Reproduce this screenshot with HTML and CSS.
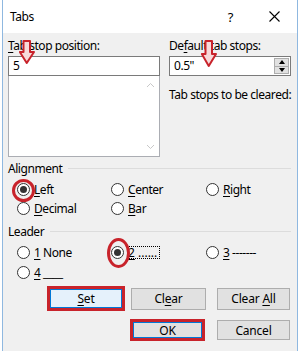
FILE: index.html
```html
<!DOCTYPE html>
<html lang="en">
<head>
  <meta charset="UTF-8" />
  <title>Tabs</title>
  <link rel="stylesheet" href="styles.css">
</head>
<body>
  <div class="dialog">
    <div class="titlebar">
      <span class="title">Tabs</span>
      <span class="help">?</span>
      <svg class="close" width="11" height="11" viewBox="0 0 11 11">
        <path d="M0.5 0.5 L10.5 10.5 M10.5 0.5 L0.5 10.5" stroke="#000" stroke-width="1.1" fill="none" />
      </svg>
    </div>

    <div class="content">
      <div class="top">
        <div class="col col-left">
          <div class="label"><u>T</u>ab stop position:</div>
          <div class="input">5</div>
          <div class="listbox">
            <div class="scroll">
              <svg width="9" height="6" viewBox="0 0 9 6"><path d="M1 5 L4.5 1.5 L8 5" stroke="#c8c8c8" fill="none" /></svg>
              <svg width="9" height="6" viewBox="0 0 9 6"><path d="M1 1 L4.5 4.5 L8 1" stroke="#c8c8c8" fill="none" /></svg>
            </div>
          </div>
          <svg class="arrow arrow-1" width="16" height="24" viewBox="0 0 16 24">
            <path d="M4.5 1 H11 V12 H15 L7.75 23 L0.8 12 H4.5 Z" fill="#f7dada" stroke="#c8232b" stroke-width="2" stroke-linejoin="round" />
          </svg>
        </div>
        <div class="col col-right">
          <div class="label">De<u>f</u>ault tab stops:</div>
          <div class="spin">
            <span class="spin-val">0.5"</span>
            <div class="spin-btns">
              <span class="spin-btn"><i class="tri up"></i></span>
              <span class="spin-btn"><i class="tri down"></i></span>
            </div>
          </div>
          <div class="label cleared">Tab stops to be cleared:</div>
          <svg class="arrow arrow-2" width="16" height="27" viewBox="0 0 16 27">
            <path d="M4.5 1 H11 V14 H15 L7.75 26 L0.8 14 H4.5 Z" fill="#f7dada" stroke="#c8232b" stroke-width="2" stroke-linejoin="round" />
          </svg>
        </div>
      </div>

      <div class="group-head"><span>Alignment</span><i></i></div>
      <div class="options align">
        <label class="opt"><span class="radio on"><span class="mark mark-left"></span></span><span><u>L</u>eft</span></label>
        <label class="opt"><span class="radio"></span><span><u>C</u>enter</span></label>
        <label class="opt"><span class="radio"></span><span><u>R</u>ight</span></label>
        <label class="opt"><span class="radio"></span><span><u>D</u>ecimal</span></label>
        <label class="opt"><span class="radio"></span><span><u>B</u>ar</span></label>
      </div>

      <div class="group-head leader-head"><span>Leader</span><i></i></div>
      <div class="options leader">
        <label class="opt"><span class="radio"></span><span><u>1</u> None</span></label>
        <label class="opt"><span class="radio on"><span class="mark mark-two"></span></span><span class="focus"><u>2</u> ......</span></label>
        <label class="opt"><span class="radio"></span><span><u>3</u> -------</span></label>
        <label class="opt"><span class="radio"></span><span><u>4</u> ____</span></label>
      </div>

      <div class="btn-row">
        <button class="btn btn-set marked"><u>S</u>et</button>
        <button class="btn btn-clear">Cl<u>e</u>ar</button>
        <button class="btn btn-clear-all">Clear <u>A</u>ll</button>
      </div>
      <div class="btn-row row-2">
        <button class="btn btn-ok marked">OK</button>
        <button class="btn btn-cancel">Cancel</button>
      </div>
    </div>
  </div>
</body>
</html>
```

FILE: styles.css
```css
body {
  margin: 0;
  background: #fff;
}
.dialog {
  margin-left: 2px;
  width: 294px;
  height: 351px;
  border-left: 1px solid #8fb8e0;
  border-right: 1px solid #8fb8e0;
  background: #f0f0f0;
  font-family: "Noto Sans", sans-serif;
  font-size: 12px;
  letter-spacing: -0.45px;
  color: #000;
  overflow: hidden;
}
u { text-decoration-thickness: 1px; text-underline-offset: 2px; }

/* title bar */
.titlebar {
  height: 33px;
  background: #fff;
  display: flex;
  align-items: center;
}
.title { margin-left: 7px; }
.help { margin-left: auto; margin-right: 36px; font-size: 13px; }
.close { margin-right: 17px; }

.content {
  padding: 5px 6px 0 5px;
}

/* top part */
.top {
  display: flex;
  gap: 9px;
}
.col { position: relative; }
.col-left { width: 152px; flex: none; }
.col-right { flex: 1; min-width: 0; }
.label {
  height: 16px;
  line-height: 16px;
  white-space: nowrap;
}
.input, .spin {
  margin-top: 2px;
  height: 20px;
  box-sizing: border-box;
  border: 1px solid #7a7a7a;
  background: #fff;
  line-height: 18px;
  padding-left: 4px;
}
.listbox {
  height: 81px;
  box-sizing: border-box;
  border: 1px solid #abadb3;
  border-top: none;
  background: #fff;
  display: flex;
  justify-content: flex-end;
}
.scroll {
  width: 17px;
  display: flex;
  flex-direction: column;
  justify-content: space-between;
  align-items: center;
  padding: 6px 0;
}
.spin {
  display: flex;
  justify-content: space-between;
  padding-right: 0;
}
.spin-btns {
  width: 15px;
  display: flex;
  flex-direction: column;
  padding: 1px 1px 1px 0;
}
.spin-btn {
  flex: 1;
  background: #e1e1e1;
  border: 1px solid #adadad;
  display: flex;
  align-items: center;
  justify-content: center;
}
.spin-btn + .spin-btn { border-top: none; }
.tri {
  width: 0;
  height: 0;
  border-left: 3.5px solid transparent;
  border-right: 3.5px solid transparent;
}
.tri.up { border-bottom: 4px solid #000; }
.tri.down { border-top: 4px solid #000; }
.cleared { margin-top: 11px; }

.arrow { position: absolute; top: 2px; }
.arrow-1 { left: 11px; }
.arrow-2 { left: 32px; }

/* groups */
.group-head {
  margin-top: 3px;
  height: 16px;
  display: flex;
  align-items: center;
  gap: 6px;
}
.group-head i {
  flex: 1;
  height: 1px;
  background: #dcdcdc;
}
.leader-head { margin-top: 5px; }
.options {
  display: grid;
  grid-template-columns: 94px 95px auto;
  grid-auto-rows: 19px;
  padding-left: 9px;
  margin-top: 4px;
}
.leader {
  grid-auto-rows: 20px;
  margin-top: 3px;
}
.opt {
  display: flex;
  align-items: center;
  gap: 4px;
  white-space: nowrap;
}
.radio {
  position: relative;
  flex: none;
  width: 13px;
  height: 13px;
  box-sizing: border-box;
  border: 1px solid #333;
  border-radius: 50%;
  background: #fff;
}
.radio.on::after {
  content: '';
  position: absolute;
  left: 2px; top: 2px;
  width: 7px; height: 7px;
  border-radius: 50%;
  background: #333;
}
.mark {
  position: absolute;
  border: 3px solid #c8232b;
  border-radius: 50%;
  box-sizing: border-box;
}
.mark-left { left: -6px; top: -5px; width: 23px; height: 23px; }
.mark-two { left: -5px; top: -9px; width: 23px; height: 30px; }
.focus {
  outline: 1px dotted #000;
  line-height: 11px;
  padding: 0 2px 0 0;
  letter-spacing: 0;
}

/* buttons */
.btn-row {
  display: flex;
  align-items: center;
  margin-top: 4px;
}
.row-2 { margin-top: 8px; }
.btn {
  font-family: "Noto Sans", sans-serif;
  font-size: 12px;
  letter-spacing: -0.2px;
  color: #000;
  height: 22px;
  padding: 0;
  box-sizing: border-box;
  background: #e1e1e1;
  border: 1px solid #adadad;
}
.btn.marked {
  border: 3px solid #c8232b;
  box-shadow: inset 0 0 0 1px #0078d7;
}
.btn-set {
  margin-left: 39px;
  width: 78px;
  height: 25px;
  background: #e5f1fb;
}
.btn-clear { margin-left: 6px; width: 75px; }
.btn-clear-all { margin-left: 11px; width: 73px; }
.btn-ok {
  margin-left: 122px;
  width: 75px;
  height: 22px;
}
.btn-cancel { margin-left: 12px; width: 73px; height: 20px; }
```
